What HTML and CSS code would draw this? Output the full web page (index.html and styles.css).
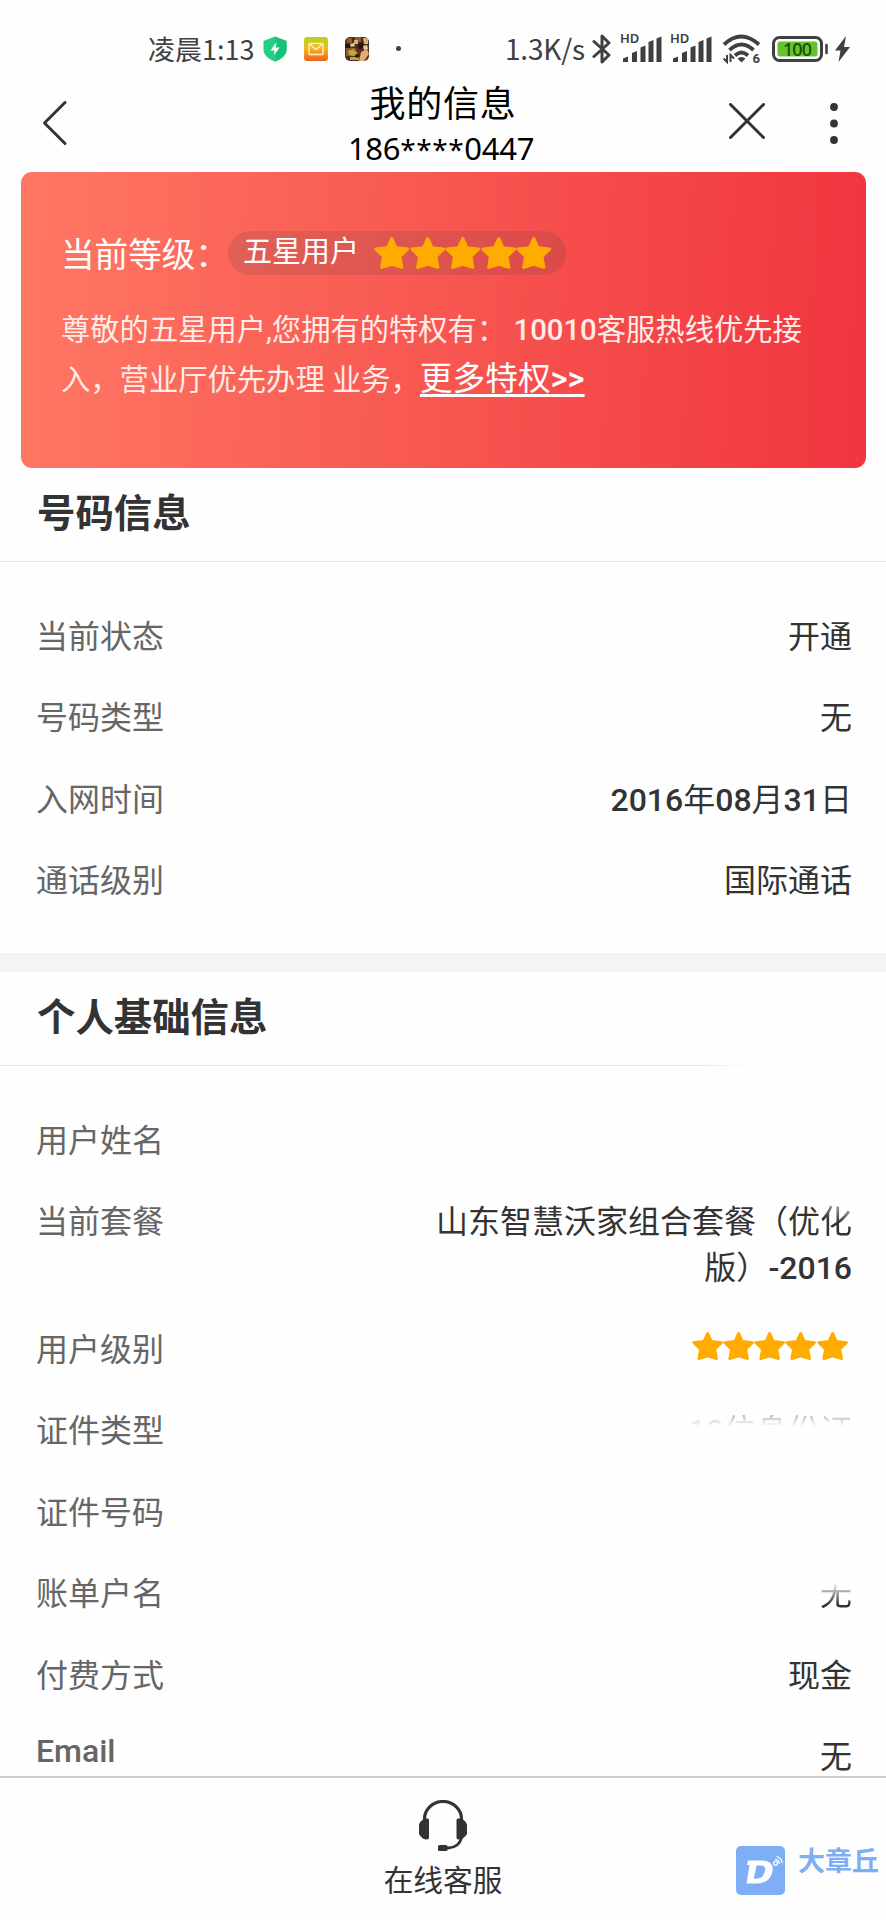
FILE: index.html
```html
<!DOCTYPE html>
<html lang="zh-CN">
<head>
<meta charset="utf-8">
<title>我的信息</title>
<link rel="stylesheet" href="styles.css">
</head>
<body>
<svg class="defs" width="0" height="0" aria-hidden="true">
  <symbol id="star" viewBox="0 0 36 34"><path d="M18 2.500 L22.300 11.800 L34 13 L26.200 20.600 L28.200 31.500 L18 28.500 L7.800 31.500 L9.800 20.600 L2 13 L13.700 11.800 Z" fill="#ffab00" stroke="#ffab00" stroke-width="3.200" stroke-linejoin="round"/></symbol>
  <symbol id="signal" viewBox="0 0 40 26"><path d="M1 22.500 6 20.500V26H1ZM10 17 15 15V26H10ZM18.500 11.500 23.500 9.500V26H18.500ZM26.500 6 31.500 4V26H26.500ZM34.500 2.500 39.500 .5V26H34.500Z" fill="#404040"/></symbol>
</svg>
<div class="screen">
  <header class="status">
    <div class="status-left">
      <span class="clock">凌晨1:13</span>
      <svg class="shield" width="24" height="26" viewBox="0 0 24 26"><path d="M12 .5 23.500 5V15Q22 22 12 25.500 2 22 .5 15V5Z" fill="#22cf87"/><path d="M12 .5 23.500 5V15Q22 22 12 25.500Z" fill="#19c17b"/><path d="M13.500 6 7.500 14.500H11.500L11 19.500 16.500 11.500H12.800Z" fill="#fff"/></svg>
      <svg class="mail" width="24" height="24" viewBox="0 0 24 24"><defs><linearGradient id="mg" x1="0" y1="0" x2="0" y2="1"><stop offset="0" stop-color="#b5d61c"/><stop offset=".5" stop-color="#f5b51c"/><stop offset="1" stop-color="#ee5f20"/></linearGradient></defs><rect width="24" height="24" rx="3" fill="url(#mg)"/><rect x="5" y="6.500" width="14" height="11" rx="1" fill="none" stroke="#fff3c4" stroke-width="1.400"/><path d="M5.500 7 12 12.500 18.500 7" fill="none" stroke="#fff3c4" stroke-width="1.400"/></svg>
      <svg class="game" width="24" height="24" viewBox="0 0 24 24"><defs><clipPath id="gc"><rect width="24" height="24" rx="5"/></clipPath></defs><g clip-path="url(#gc)"><path fill="#4a3020" d="M0 0h24v24H0z"/><path fill="#8c5a2c" d="M2 1h5v5H2zM10 0h6v5h-6zM1 11h10v8H1z"/><path fill="#e2ad72" d="M9 3h4v4H9zM18 1h5v6h-4zM16 15l6-3 2 5-5 7h-5z"/><path fill="#c3a13c" d="M3 14l5-2 5 4-4 3-5-1zM5 20h9v3H5z"/><path fill="#24170f" d="M0 7h5v4H0zM13 7l5-2v5l-4 3zM11 17l3 1-1 3-3-1z"/><path fill="#e8c6a3" d="M5 7l4-1 1 3-4 1zM18 9l4-1 1 4-4 1z"/><path fill="#7b241a" d="M13 11l3 2-2 3-3-2z"/></g></svg>
      <i class="more-dot"></i>
    </div>
    <div class="status-right">
      <span class="speed">1.3K/s</span>
      <svg class="bt" width="20" height="32" viewBox="0 0 20 32"><path d="M2 8.500 17 22 10 29V3L17 10 2 23.500" fill="none" stroke="#404040" stroke-width="3" stroke-linejoin="round" stroke-linecap="round"/></svg>
      <span class="sig"><b>HD</b><svg width="40" height="26"><use href="#signal"/></svg></span>
      <span class="sig"><b>HD</b><svg width="40" height="26"><use href="#signal"/></svg></span>
      <svg class="wifi" width="40" height="30" viewBox="0 0 40 30"><g fill="none" stroke="#404040" stroke-width="3.800"><path d="M2 10.500Q19 -5.500 37 10.500"/><path d="M7.500 16Q19.500 5 31.500 16"/><path d="M13 21.500Q19.500 15.500 26 21.500"/></g><path d="M15.500 24.500Q19.500 21.500 23.500 24.500L19.500 28.500Z" fill="#404040"/><path d="M5 21V28L1.500 24.500M8.500 28V21L12 24.500" fill="none" stroke="#404040" stroke-width="2"/><text x="30.500" y="28.500" class="wifi-n">6</text></svg>
      <svg class="batt" width="57" height="26" viewBox="0 0 57 26"><rect x="1.500" y="1.500" width="48" height="23" rx="6" fill="#fff" stroke="#404040" stroke-width="3"/><rect x="5.500" y="5.500" width="40" height="15" rx="2.500" fill="#63c42d"/><path d="M54.500 9V17" stroke="#404040" stroke-width="2.600" stroke-linecap="round"/><text x="25.500" y="19.500" text-anchor="middle" textLength="29" class="batt-n">100</text></svg>
      <svg class="bolt" width="15" height="26" viewBox="0 0 15 26"><path d="M11 0 0 14.500H5.500L3.500 26 15 11H9Z" fill="#404040"/></svg>
    </div>
  </header>

  <nav class="bar">
    <svg class="back" width="26" height="46" viewBox="0 0 26 46"><path d="M23 2.500 2.500 23 23 43.500" fill="none" stroke="#333" stroke-width="3" stroke-linecap="round" stroke-linejoin="round"/></svg>
    <div class="heading"><h1>我的信息</h1><p>186<span class="mask">****</span>0447</p></div>
    <div class="acts">
      <svg width="36" height="36" viewBox="0 0 36 36"><path d="M1.500 1.500 34.500 34.500M34.500 1.500 1.500 34.500" stroke="#333" stroke-width="3" stroke-linecap="round"/></svg>
      <svg class="dots" width="8" height="42" viewBox="0 0 8 42"><g fill="#333"><circle cx="4" cy="4" r="3.900"/><circle cx="4" cy="20.500" r="3.900"/><circle cx="4" cy="37" r="3.900"/></g></svg>
    </div>
  </nav>

  <main class="content">
    <section class="card">
      <div class="level"><span class="level-label">当前等级：</span>
        <div class="pill"><span>五星用户</span><div class="stars big"><svg><use href="#star"/></svg><svg><use href="#star"/></svg><svg><use href="#star"/></svg><svg><use href="#star"/></svg><svg><use href="#star"/></svg></div></div>
      </div>
      <p class="perks">尊敬的五星用户,您拥有的特权有： <span class="num">10010</span>客服热线优先接<br>入，营业厅优先办理 业务，<a class="link">更多特权<span class="num">&gt;&gt;</span></a></p>
    </section>

    <section>
      <h2>号码信息</h2>
      <dl class="rows first">
        <div><dt>当前状态</dt><dd>开通</dd></div>
        <div><dt>号码类型</dt><dd>无</dd></div>
        <div><dt>入网时间</dt><dd><span class="num">2016</span>年<span class="num">08</span>月<span class="num">31</span>日</dd></div>
        <div><dt>通话级别</dt><dd>国际通话</dd></div>
      </dl>
    </section>
    <section class="second">
      <h2 class="faded-rule">个人基础信息</h2>
      <dl class="rows">
        <div><dt>用户姓名</dt><dd></dd></div>
        <div><dt>当前套餐</dt><dd>山东智慧沃家组合套餐（优<span class="soft">化</span><br>版）<span class="num">-2016</span></dd></div>
        <div><dt>用户级别</dt><dd><div class="stars"><svg><use href="#star"/></svg><svg><use href="#star"/></svg><svg><use href="#star"/></svg><svg><use href="#star"/></svg><svg><use href="#star"/></svg></div></dd></div>
        <div><dt>证件类型</dt><dd class="fade-down">18位身份证</dd></div>
        <div><dt>证件号码</dt><dd></dd></div>
        <div><dt>账单户名</dt><dd class="fade-up">无</dd></div>
        <div><dt>付费方式</dt><dd>现金</dd></div>
        <div><dt class="latin">Email</dt><dd>无</dd></div>
      </dl>
    </section>
  </main>

  <footer class="footer">
    <svg width="50" height="51" viewBox="0 0 50 51"><path d="M6.500 21V19A18.500 17.500 0 0 1 43.500 19V21" fill="none" stroke="#333" stroke-width="3.200"/><path d="M5 19.500Q5.500 18.500 7 18.500H9.500Q11 18.500 11 20V37.500Q11 39.500 9 39.500Q4 39.500 1 34V24.500Q2 21.500 5 19.500ZM45 19.500Q44.500 18.500 43 18.500H40Q38.500 18.500 38.500 20V37.500Q38.500 39.500 40.500 39.500Q46 39 49 34V24.500Q48 21.500 45 19.500Z" fill="#333"/><path d="M43.500 38Q41 47.500 30 48H24" fill="none" stroke="#333" stroke-width="2.800"/><rect x="20" y="45" width="9.500" height="6" rx="1.500" fill="#333"/></svg>
    <span>在线客服</span>
    <div class="brand">
      <svg width="49" height="49" viewBox="0 0 49 49"><rect width="49" height="49" rx="5" fill="#7eaef5"/><path fill-rule="evenodd" d="M12 14.500H27Q38 15.500 36.500 25 34.500 37.500 20 37.500H10.500L13.500 19H11ZM20.500 19.500 17.800 32.800H20.500Q27.500 32.500 29 25 30 19.500 24.500 19.500Z" fill="#fff"/><circle cx="39.500" cy="17.300" r="1.900" fill="none" stroke="#fff" stroke-width="1.300"/><path d="M39 13.200Q43 14 43.500 18M40.500 10.500Q45.500 12 46.300 17" fill="none" stroke="#fff" stroke-width="1.300"/></svg>
      <strong>大章丘</strong>
    </div>
  </footer>
</div>
</body>
</html>
```
FILE: styles.css
```css
* { box-sizing: border-box; }
body { margin: 0; background: #fefefe; font-family: Roboto, "Noto Sans CJK SC", sans-serif; color: #333; }
h1, h2, p, dl, dd { margin: 0; }
svg { display: block; flex: none; }
.defs { position: absolute; }
.num { font-weight: 500; }
.screen { width: 886px; height: 1920px; display: flex; flex-direction: column; overflow: hidden; }

.status { height: 80px; flex: none; display: flex; justify-content: space-between; padding: 0 36px 0 148px; color: #404040; font-family: "Noto Sans CJK SC", sans-serif; }
.status-left, .status-right { display: flex; align-items: center; white-space: nowrap; }
.clock { width: 106px; font-size: 27px; line-height: 40px; margin-top: 17px; }
.shield { margin: 17px 0 0 9px; }
.mail, .game { margin: 17px 0 0 17px; }
.more-dot { width: 5px; height: 5px; border-radius: 50%; background: #404040; margin: 17px 0 0 27px; }
.status-right > svg { margin-top: 17px; }
.speed { width: 85px; font-size: 28px; line-height: 40px; margin-top: 15px; letter-spacing: -.2px; }
.status-right > .bt { margin-left: 2px; }
.sig { width: 40px; height: 32px; margin: 11px 0 0 10px; display: grid; }
.sig b { font: 600 13px/14px "Noto Sans", sans-serif; margin: 1px 0 0 -2px; }
.sig b, .sig svg { grid-area: 1 / 1; }
.sig svg { align-self: end; }
.wifi { margin-left: 10px; }
.wifi-n { font: 700 13px Roboto, sans-serif; fill: #404040; }
.batt { margin-left: 10px; }
.batt-n { font: 500 18px "Noto Sans", sans-serif; fill: #174c08; }
.bolt { margin-left: 6px; }

.bar { height: 92px; flex: none; display: grid; grid-template-columns: 1fr 200px 1fr; padding: 0 48px 0 42px; }
.back { margin-top: 20px; }
.heading { text-align: center; color: #000; white-space: nowrap; padding-left: 6px; }
.heading h1 { font: 400 36px/46px "Noto Sans CJK SC", sans-serif; letter-spacing: .8px; margin-top: -2px; }
.heading p { font: 400 31px/42px "Noto Sans", sans-serif; letter-spacing: -.3px; margin: 3px 0 0 -4px; }
.mask { font-size: 28px; letter-spacing: .6px; }
.acts { display: flex; justify-content: flex-end; gap: 65px; padding-top: 23px; }

.content { height: 1604px; flex: none; overflow: hidden; }
.card { margin: 0 20px 0 21px; height: 296px; border-radius: 11px; padding: 59px 30px 0 40px; color: #fff; background: linear-gradient(92deg, #ff7763 0%, #f75550 52%, #f1363f 98%); white-space: nowrap; }
.level { display: flex; height: 44px; align-items: center; }
.level-label { width: 167px; font-size: 33.600px; line-height: 44px; padding-top: 5px; }
.pill { width: 338px; height: 44px; border-radius: 22px; background: rgba(90, 60, 60, .16); display: flex; align-items: center; padding-left: 15px; }
.pill span { font-size: 29px; line-height: 40px; margin-top: -3px; width: 131px; }
.stars { display: flex; }
.stars svg { width: 31.300px; height: 30px; }
.stars.big svg { width: 35.500px; height: 34px; }
.perks { margin-top: 30px; font-size: 29.300px; line-height: 50px; color: #ffebe8; }
.link { font-size: 32.700px; line-height: 40px; color: #fff; text-decoration: underline; text-decoration-thickness: 3px; text-underline-offset: 4px; }

h2 { height: 94px; padding: 18px 37px 0; font-size: 38.400px; line-height: 56px; font-weight: 700; border-bottom: 1px solid #e3e3e3; }
.rows { padding: 51.500px 34px 0 36px; font-size: 32px; line-height: 46px; }
.rows.first { height: 391px; }
.rows > div { display: flex; justify-content: space-between; min-height: 46px; margin-bottom: 35.500px; }
dt { color: #666; }
dd { text-align: right; font-weight: 400; }
.second { border-top: 19px solid #f4f4f4; }
.faded-rule { border-image: linear-gradient(90deg, #e3e3e3 78%, transparent 85%) 1; }
.latin { font-weight: 500; line-height: 34px; }
dd .stars { padding: 4px 4px 0 0; }
.soft { mask-image: linear-gradient(200deg, #0008 20%, #000 50%); }
.fade-down { mask-image: linear-gradient(#0006 10%, #0002 30%, transparent 40%); }
.fade-up { mask-image: linear-gradient(transparent 26%, #0005 42%, #000 72%); }

.footer { height: 144px; flex: none; border-top: 2px solid #ccc; padding-top: 22px; display: flex; flex-direction: column; align-items: center; position: relative; font-size: 29.700px; line-height: 44px; }
.footer > span { margin-top: 8px; }
.brand { position: absolute; left: 736px; top: 68px; display: flex; gap: 13px; }
.brand strong { color: #7eaef5; font-size: 27px; line-height: 32px; font-weight: 700; white-space: nowrap; }
```
